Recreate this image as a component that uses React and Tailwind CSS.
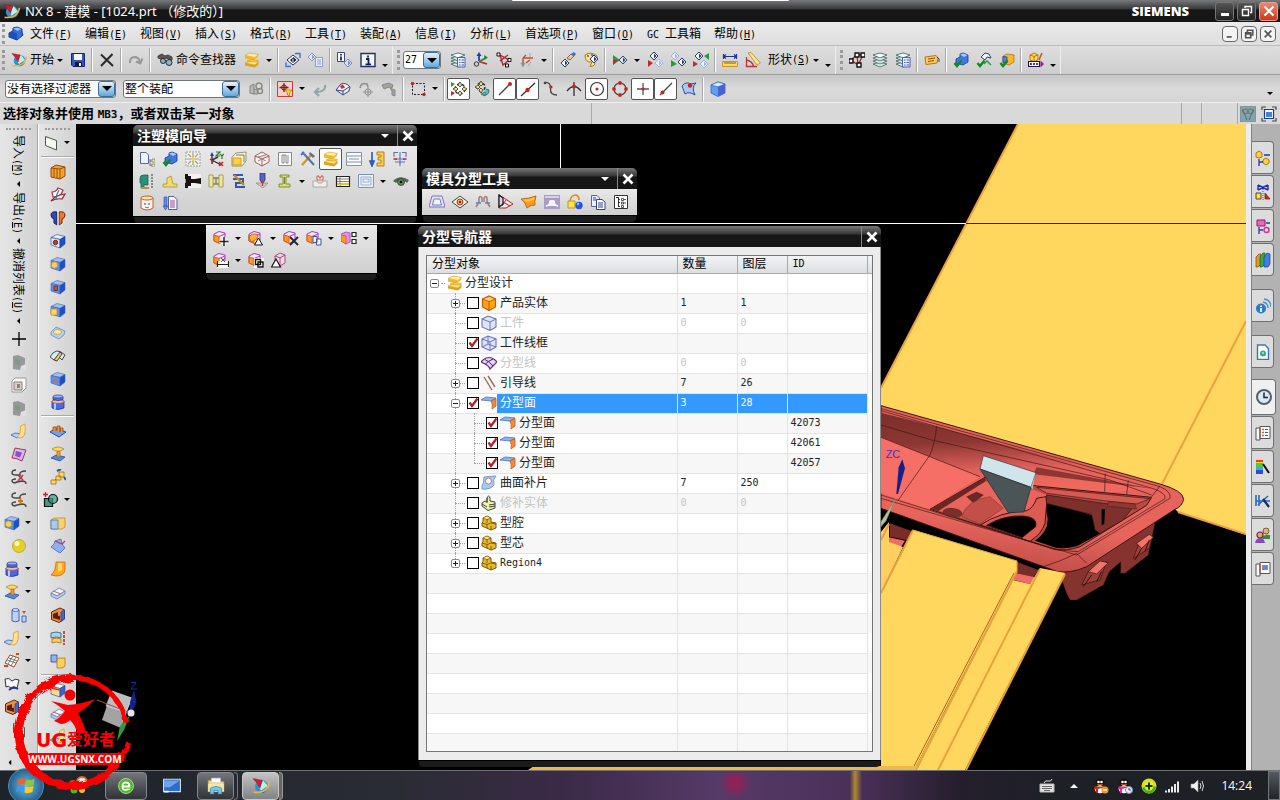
import React, { useState } from 'react';

//small shorthands, nearly every icon below is made of these
const P = ({ d, f = 'none', s = 'none', w = 1 }) => <path d={d} fill={f} stroke={s} strokeWidth={w} />;
const Cube = ({ t = '#9fc0f5', l = '#5f8fe8', r = '#1f4fc0', s = '#3f5fb0' }) => (
  <>
    <P d="M1 4.5 7 1.5 15 3.5 10 6.5Z" f={t} s={s} w={0.6} />
    <P d="M1 4.5 10 6.5 10 15 1 12Z" f={l} s={s} w={0.6} />
    <P d="M10 6.5 15 3.5 15 11 10 15Z" f={r} s={s} w={0.6} />
  </>
);
const MoldCube = () => (
  <>
    <P d="M1 4 6 1.5 12 3 12 10 6.5 13.5 1 11Z" f="#fbe6ff" s="#a03cc0" />
    <P d="M1 5 6 6.5 6 13 1 11Z" f="#ff9a20" s="#d86400" />
    <P d="M6 6.5 12 4" s="#a03cc0" />
  </>
);
const Layers = () => (
  <>
    <P d="M1 12 8 10 15 12 8 15Z" f="#d6f0e4" s="#3c5a60" w={0.8} />
    <P d="M1 9 8 7 15 9 8 12Z" f="#d6f0e4" s="#3c5a60" w={0.8} />
    <P d="M1 6 8 4 15 6 8 9Z" f="#d6f0e4" s="#3c5a60" w={0.8} />
    <P d="M1 3 8 1 15 3 8 6Z" f="#f0fff8" s="#3c5a60" w={0.8} />
  </>
);
const Gem = ({ x = 0, y = 0, c = '#27376b', f = '#ffffff' }) => (
  <g transform={`translate(${x} ${y})`}>
    <P d="M0 4 4 0 8 4 4 8Z" f={f} s={c} />
    <P d="M4 1.5 6.5 4 4 6.5Z" f={c} />
  </g>
);
const Tick = () => <P d="M1.5 11 4 14 8.5 8.5" s="#118a22" w={2.4} />;
const Stack = () => (
  <>
    <P d="M1 3.500 6 1 14.500 2.500 11 5.500Z" f="#fff0a8" s="#d29a12" w={0.6} />
    <P d="M1 3.5 11 5.5 14.5 2.5 14 5 9 8.5 1 6.5Z" f="#f0b828" />
    <P d="M3 9 8 7.5 14.5 8.5 11 11Z" f="#ffd24a" s="#d29a12" w={0.6} />
    <P d="M1 11 5 9.5 14.5 10 11 13Z" f="#ffe680" s="#d29a12" w={0.6} />
    <P d="M1 11 11 13 14.5 10 14.5 12.5 11 15.5 1 13.5Z" f="#e0a018" />
  </>
);
const Pot = () => (
  <>
    <P d="M2 7 14 7 14 14Q8 17 2 14Z" f="#4a68e4" s="#24368f" w={0.8} />
    <P d="M4 8 6 8 6 15 4 15Z" f="#b4c6ff" />
    <ellipse cx="8" cy="7.5" rx="6" ry="1.8" fill="#e9c0b0" stroke="#c2502a" strokeWidth="0.8" />
    <P d="M3 2.5 13 2.5 13 5.5Q8 7.5 3 5.5Z" f="#4f78e4" s="#24368f" w={0.8} />
    <ellipse cx="8" cy="2.500" rx="5" ry="1.5" fill="#9db8f8" stroke="#24368f" strokeWidth="0.7" />
  </>
);
const Ledge = ({ c = '#ffc83a' }) => (
  <>
    <P d="M0 12 4 10 11 11 6 15Z" f="#b8d4f8" s="#3d62b0" w={0.8} />
    <P d="M6 14Q10 12 9.5 3L14 1Q15 11 12 14Q9 16 6 14Z" f={c} s="#d69c38" w={0.8} />
  </>
);
const Section = () => (
  <>
    <P d="M1.5 5 10 1 14.5 3 14.5 12 9 15.5 1.5 12.5Z" f="#ef9040" s="#5c2a12" />
    <P d="M3 7 8 5 8 9 10 8.5 10 13 3 11Z" f="#55200c" />
    <P d="M11 5 14.5 3 14.5 12 11 14.5Z" f="#3a6ad8" s="#23408f" w={0.7} />
  </>
);
const Page = () => <P d="M1.5 1.5 7 1.5 9.5 4 9.5 12.5 1.5 12.5Z" f="#eef2ff" s="#5566a8" />;
const Penguin = ({ c }) => (
  <>
    <ellipse cx="7" cy="5" rx="4.5" ry="4.5" fill="#15120f" />
    <circle cx="5.5" cy="4" r="1.3" fill="#fff" />
    <circle cx="8.5" cy="4" r="1.3" fill="#fff" />
    <P d="M3.5 6.5 10.5 6.5 7 8.5Z" f="#ffae10" />
    <ellipse cx="7" cy="11.5" rx="5" ry="3.8" fill="#fff" />
    <P d="M1.5 8.5 12 8.5 13 12 9 10 5 11 5 15 3 15 3 11 1 12Z" f={c} />
  </>
);

const art = {
  nx: (
    <>
      <circle cx="8.5" cy="8.5" r="5.8" fill="#2b93d8" />
      <P d="M4 11Q9 15 13 10 12 14 8.5 14.3Z" f="#1a4fa0" />
      <P d="M10 3 14 8 8 12 6 9Z" f="#bdf0e8" />
      <P d="M1 1.5 9 3 7 10 5 6Z" f="#d81e2c" s="#8c1018" w={0.5} />
      <P d="M1.5 13.5Q14 15 15.5 4.5" s="#f3b32c" w={1.5} />
    </>
  ),
  part: (
    <>
      <P d="M1 7 5 5 5 2 9 1 14 3 14 6 15 9 9 14 1 11Z" f="#2f6fe0" s="#12388f" />
      <P d="M5 2.5 9 1.5 13.5 3 9.5 5Z" f="#8fc0ff" />
      <P d="M1 7 5 5.5 9 7.5 9 13.5 1 11Z" f="#1d50b8" />
    </>
  ),
  save: (
    <>
      <P d="M1.5 1.5 14.5 1.5 14.5 14.5 3 14.5 1.5 13Z" f="#3558b8" s="#14246a" />
      <P d="M4 2 12 2 12 8 4 8Z" f="#f2f6ff" />
      <P d="M5 10 12 10 12 14.5 5 14.5Z" f="#10183c" />
      <P d="M9 11 11 11 11 14 9 14Z" f="#fff" />
    </>
  ),
  cut: <P d="M2 2.5 14 14M13.5 2 2 14" s="#2a2a2a" w={2} />,
  redo: <P d="M2 11Q1.5 5 7 5 11 5.5 12 10M14.5 6.5 12.3 11.5 8 9.5" s="#979797" w={2} />,
  find: (
    <>
      <P d="M1 4 5 2 8 4 11 3 15 5 15 8 9 6 7 8 1 6Z" f="#5a5550" s="#332e2a" w={0.8} />
      <circle cx="6" cy="9" r="2.5" fill="#8fb0c8" stroke="#2b2b2b" />
      <circle cx="12" cy="10.5" r="3" fill="#8fb0c8" stroke="#2b2b2b" />
    </>
  ),
  stack: <Stack />,
  rot: (
    <>
      <P d="M2 8 8 3 14 8 8 13Z" f="#fff" s="#27376b" />
      <P d="M5 8 8.5 5 11.5 8 8 11Z" f="#101c4a" />
      <P d="M8 6.500v3.5" s="#fff" />
      <P d="M1 10.5V14.500H6M10 1.5H15V6" s="#3b74d8" w={1.4} />
    </>
  ),
  rotpage: (
    <>
      <Gem x={0} y={1} c="#8f99c0" f="#dfe6fb" />
      <P d="M7.5 5.5 14.5 5.5 14.5 14.5 7.5 14.5Z" f="#eef2ff" s="#8b98c8" />
      <P d="M9 8h4M9 10h4M9 12h4" s="#8b98c8" />
    </>
  ),
  infogem: (
    <>
      <P d="M.5 .5h7v9h-7Z" f="#fff" s="#3b4680" />
      <P d="M4 2v1.5M4 4.5v4" s="#1a2670" w={1.8} />
      <Gem x={7} y={7} c="#7488c8" f="#dce6ff" />
    </>
  ),
  info: (
    <>
      <P d="M1 1.5h14v13H1Z" f="#f4f6ff" s="#222f6a" w={1.4} />
      <P d="M8 3.5v2M6 7h2.5v5M5.5 12.3h5.5" s="#111a55" w={1.8} />
    </>
  ),
  layers: <Layers />,
  laylist: (
    <>
      <Layers />
      <P d="M7.5 5.5h7.5v9.5H7.5Z" f="#e8edff" s="#4e60a8" />
      <P d="M9 8h1.5M11.5 8h2.5M9 10.5h1.5M11.5 10.5h2.5M9 13h1.5M11.5 13h2.5" s="#4e60a8" />
    </>
  ),
  wcs: (
    <>
      <P d="M6 9V2" s="#1f3fb8" w={1.8} />
      <P d="M3.5 4 6 0 8.5 4Z" f="#1f3fb8" />
      <P d="M6 9.5 14 12" s="#cc1c1c" w={1.8} />
      <P d="M6 9.5 13 6" s="#21883a" w={1.8} />
      <P d="M11 3 15 5.5 11.5 8Z" f="#21883a" />
      <circle cx="3.5" cy="12" r="2.2" fill="none" stroke="#333" />
    </>
  ),
  wcsdrag: (
    <>
      <P d="M4 3 13 8 7 13ZM4 3 7 13M4 9 12 3" s="#a82632" w={1.3} />
      <P d="M1 1h3v3H1ZM12 6.5h3v3h-3ZM9.5 12h3v3h-3Z" f="#fff" s="#111" />
    </>
  ),
  axes: (
    <>
      <P d="M4 6V13M4 6H14M4 6 7 3M7 11 11 8" s="#b8503c" w={1.4} />
      <P d="M2 11 6 11 4 15ZM11 1v4M9 14 12 10" f="#888" s="#999" w={0.8} />
    </>
  ),
  brush: (
    <>
      <P d="M7 6 11 2 14 4 10 8Z" f="#f3c880" s="#555" w={0.8} />
      <P d="M11 2 14 0 16 2 14 4.500Z" f="#3b6ce0" />
      <Gem x={1} y={7} />
    </>
  ),
  palette: (
    <>
      <P d="M2 3Q8-1 14 4 15 8 11 9 14 14 7 14.5L9 10Q2 11 2 3Z" f="#ffe49a" s="#a87a20" />
      <circle cx="5" cy="4" r="1" fill="#d03030" />
      <circle cx="9" cy="3" r="1" fill="#3060d0" />
      <Gem x={7} y={3} />
    </>
  ),
  play: (
    <>
      <P d="M1 3 8 8 1 13Z" f="#2a9a3a" />
      <P d="M1 8 6 8 1 13Z" f="#c02a2a" />
      <Gem x={7} y={4} c="#3a4670" f="#dfe6fb" />
    </>
  ),
  gems1: (<><Gem x={3} y={0} /><Gem x={8} y={7} c="#9fb2e8" f="#e8efff" /><P d="M1 8 6 11 1 15Z" f="#c02a2a" /></>),
  gems2: (<><Gem x={1} y={0} c="#9fb2e8" f="#e8efff" /><Gem x={8} y={6} /><P d="M1 8 7 12 1 15Z" f="#2a9a3a" /></>),
  gems3: (<><Gem x={2} y={0} /><Gem x={7} y={8} c="#9fb2e8" f="#e8efff" /><P d="M0 9 5 12 0 15Z" f="#c02a2a" /><P d="M16 1 11 4 16 8Z" f="#2a9a3a" /></>),
  ruler: (
    <>
      <P d="M1.5 2v5M14.5 2v5M1.5 4.5h13M4 2.5 1.5 4.5 4 6.5M12 2.5l2.5 2L12 6.5" s="#25368f" w={1.2} />
      <P d="M.5 9.5h15v5H.5Z" f="#ffd868" s="#c89628" />
      <P d="M3 10v2M5 10v2M7 10v2M9 10v2M11 10v2M13 10v2" s="#80601a" />
    </>
  ),
  angle: (
    <>
      <P d="M1.5 5V14.5H12M1.5 8Q7 9 8.5 14" s="#b8343c" w={1.3} />
      <P d="M3 1 6 .5 15.5 11 12 13Z" f="#ffe08a" s="#b08a30" w={0.8} />
    </>
  ),
  netsel: (
    <>
      <P d="M2 8 8 3 14 3M8 3 9 13M2 8 9 13 14 3" s="#b01e1e" w={1.3} />
      <P d="M6 1h4v4H6ZM12 1h4v4h-4ZM0 7h4v4H0ZM8 11h4v4H8Z" f="#fff" s="#111" w={1.4} />
    </>
  ),
  tag: (
    <>
      <P d="M1 5 12 3.5 14 6 13 11 2 12.5Z" f="#ffc85a" s="#b87818" />
      <P d="M4 7 11 6M4 9.5 10 8.5" s="#8a5510" />
      <P d="M13 5Q16 6 15 10" s="#444" />
    </>
  ),
  okpart: (<><P d="M3 7 7 5 7 2 10 1 15 3 15 10 10 13 3 11Z" f="#3f78e4" s="#12388f" w={0.8} /><P d="M7 2.5 10 1.5 14.5 3 11 5Z" f="#a6ccff" /><Tick /></>),
  oksurf: (<><P d="M5 5 9 1 13 2 15 6 11 5 9 8Z" f="#e8f4ff" s="#2f3f7a" /><P d="M8 12 11 9 15 13" s="#2a9a3a" w={1.4} /><Tick /></>),
  okbox: (<><P d="M4 4 8 2 15 3 15 10 10 13 4 11Z" f="#f8b830" s="#b87010" w={0.8} /><P d="M4 4.5 8 5 8 11 4 10.5Z" f="#4f86e8" s="#22408f" w={0.8} /><Tick /></>),
  editbar: (
    <>
      <P d="M2 3 6 1 10 3 10 8 6 9.500 2 8Z" f="#ffd850" s="#b87810" />
      <P d="M2 3 6 4.5 10 3M6 4.5V9" s="#b87810" />
      <P d="M11 8 14 1" s="#c05c20" w={1.6} />
      <P d="M.5 9.5h11v5H.5Z" f="#fff" s="#22104f" w={1.2} />
      <P d="M3 11v2M6 11v2M9 11v2" s="#22104f" w={1.6} />
      <P d="M12.5 8.5 16 12 12.5 15.5Z" f="#9a1c90" />
    </>
  ),
  grayhold: (<><P d="M2 5 6 3 6 13 2 12ZM6 8 10 9 10 13 6 13" f="#b9b9b5" s="#85857f" /><circle cx="11" cy="5" r="3" fill="none" stroke="#8d8d86" strokeWidth="1.5" /><circle cx="12" cy="10" r="2.5" fill="none" stroke="#8d8d86" strokeWidth="1.5" /></>),
  snapf: (
    <>
      <P d="M.5 .5h15v15H.5Z" f="#f5cfca" s="#c34038" />
      <P d="M7 2v9M2.5 6.5h9" s="#7a2018" w={1.3} />
      <circle cx="7" cy="6.5" r="2.5" fill="none" stroke="#7a2018" />
      <P d="M8 9h7l-2.5 3v3l-2-1v-2Z" f="#ffd23a" s="#a87810" w={0.7} />
    </>
  ),
  back: <P d="M13 4Q14 11 4 11M7 7 3 11 7 15" s="#8fa6a6" w={2.2} />,
  gembox: (
    <>
      <P d="M1 9 6 3Q11 1 15 6L14 10 8 14Z" f="#e9eefc" s="#3a4678" />
      <P d="M1 9 8 10 8 14M8 10 14 6" s="#3a4678" />
      <P d="M5 5 8 3.5 10 6.5 6.5 8Z" f="#c8323a" />
    </>
  ),
  grayarc: (<><P d="M2 7Q3 1 9 3L10 6" s="#8f8f8f" w={1.6} /><circle cx="10" cy="11" r="3" fill="none" stroke="#8f8f8f" /><P d="M10 6v10M5 11h10" s="#8f8f8f" /></>),
  graytap: (<><P d="M1 4 8 2 12 4 11 7 8 6 3 8Z" f="#a3a29c" s="#8a8984" /><P d="M9 7 14 9 14 15 11 14 11 10Z" f="#a3a29c" s="#8a8984" /></>),
  rect: (<><rect x="2.5" y="2.5" width="12" height="11" fill="none" stroke="#222" strokeDasharray="2 1.5" /><circle cx="2.5" cy="2.5" r="1.7" fill="#c42222" /><circle cx="14" cy="13.5" r="1.7" fill="#c42222" /></>),
  snapall: (
    <>
      <circle cx="9" cy="8" r="5" fill="none" stroke="#222" strokeDasharray="3 2" strokeWidth="1.4" />
      <P d="M9 1 11 4 9 6 7 4ZM9 10 11 12 9 15 7 12ZM2 8 5 6 7 8 5 10ZM11 8 13 6 16 8 13 10Z" f="#f0dc80" s="#333" w={0.8} />
      <P d="M0 1 4 3 0 6Z" f="#2a9a3a" />
      <P d="M0 10 4 12 0 15Z" f="#c02a2a" />
    </>
  ),
  snapref: (
    <>
      <circle cx="7" cy="6" r="4" fill="none" stroke="#222" strokeDasharray="3 2" strokeWidth="1.4" />
      <P d="M7 0 9 3 7 5 5 3ZM7 7 9 9 7 12 5 9ZM1 6 4 4 6 6 4 8Z" f="#f0dc80" s="#333" w={0.8} />
      <P d="M9 14Q15 15 15 9L12 8M11 15 7 13 11 11Z" f="#5ac0b0" s="#257a78" />
    </>
  ),
  endpt: (<><P d="M2 14 13.5 2.5" s="#444" w={1.3} /><circle cx="13" cy="3" r="2" fill="#d42020" /></>),
  midpt: (<><P d="M1 15 15 2" s="#333" w={1.3} /><circle cx="7.5" cy="9" r="2.2" fill="#c82418" /></>),
  ctrlpt: (<><P d="M2 1.5Q8 1 7.5 8 7 14 14 14" s="#444" w={1.3} /><circle cx="2" cy="2" r="1.3" fill="#444" /><circle cx="8" cy="6" r="1.6" fill="#c82418" /></>),
  interpt: (<><P d="M8 1V15M1 10Q8 1 15 10" s="#333" w={1.3} /><circle cx="8" cy="5.5" r="2" fill="#c82418" /></>),
  center: (<><circle cx="8" cy="8" r="6.5" fill="none" stroke="#333" strokeWidth="1.2" /><circle cx="8" cy="8" r="1.6" fill="#d42020" /></>),
  quad: (<><circle cx="8" cy="8" r="6" fill="none" stroke="#444" strokeWidth="1.2" /><circle cx="8" cy="2" r="1.9" fill="#c82418" /><circle cx="8" cy="14" r="1.9" fill="#c82418" /><circle cx="2" cy="8" r="1.9" fill="#c82418" /><circle cx="14" cy="8" r="1.9" fill="#c82418" /></>),
  exist: (<><P d="M8 2V14M2 8H14" s="#555" w={1.3} /><circle cx="8" cy="8" r="1.6" fill="#d42020" /></>),
  oncurve: (<><P d="M2 14 14 2" s="#444" w={1.3} /><circle cx="4.5" cy="11.5" r="2" fill="#c82418" /></>),
  onface: (<><P d="M1 5Q5 0 10 3L15 2Q10 6 14 14 8 10 4 13Z" f="#a8c8f8" s="#2a4a9a" /><circle cx="9" cy="4.5" r="2.2" fill="#c82418" /></>),
  bluecube: (
    <>
      <P d="M1 4 8 1 15 3 15 12 8 15.5 1 12Z" f="#5da0f0" s="#2f62c8" w={0.8} />
      <P d="M1 4 8 1 15 3 8 6Z" f="#d8ecff" s="#2f62c8" w={0.7} />
      <P d="M8 6 15 3 15 12 8 15.5Z" f="#4c60d8" />
    </>
  ),
  flags: (<><P d="M0 0h16v16H0Z" f="#83a3ad" s="#7a8e96" /><P d="M2 4 7 3 8 7 4 8ZM14 4 9 3 8 7 12 8Z" f="#9a9a96" s="#63777e" /><P d="M3 4l4 10M13 4 9 14" s="#63777e" w={1.2} /></>),
  screen: (<><P d="M1 4V1h4M11 1h4v3M15 12v3h-4M5 15H1v-3" s="#444" w={1.2} /><P d="M3.5 3.5h9v9h-9Z" f="#fff" s="#223a78" w={1.2} /><P d="M5 6h6v5H5Z" f="#3c86d8" /></>),

  //injection mold wizard
  pagetree: (<><Page /><P d="M11 8v7M11 10h3M11 14h3" s="#7c7c5c" /><P d="M13 8h3v3h-3ZM13 13h3v3h-3Z" f="#e8e8c0" s="#7c7c5c" w={0.7} /></>),
  family: (<><rect x="1" y="1" width="14" height="14" fill="#f3f3ee" stroke="#999" strokeDasharray="2 1" /><P d="M8 2v12M2 8h12M3 3l3 3M13 3l-3 3M3 13l3-3M13 13l-3-3" s="#9ba080" w={1.2} /><circle cx="8" cy="8" r="1.8" fill="#e8dc40" /></>),
  xyz: (<><P d="M4 13V4M4 9 13 14M4 9 10 6" s="#333" w={1.4} /><P d="M2 5 4 1 6 5Z" f="#1f3fd0" /><P d="M8 1h4l-4 4h4M12 3l2 2 2-2M14 5v3" s="#1f7c30" w={1.2} /><P d="M2 8 6 11M11 11l4 4M15 11l-4 4" s="#c82020" w={1.5} /></>),
  workbox: (<><P d="M1 6 5 2 15 1 15 10 11 15 1 15Z" f="#f5f2e0" s="#857a50" w={0.8} /><P d="M2 7h8v7H2Z" f="#ffd040" s="#c89010" w={0.8} /><P d="M5 4h8v7" s="#857a50" /></>),
  layout: (<><P d="M8 1 15 5 8 8 1 5ZM1 5V11L8 15 15 11V5M8 8v7" f="#fdf1f0" s="#a04a48" w={0.9} /><P d="M4 6 12 4M4 10 8 8 12 10" s="#888" /></>),
  shrink: (<><P d="M1.5 1.5h13v13h-13Z" f="#fbfbfb" s="#8a8a8a" /><P d="M9 4H5V12H7V8M7 4V8M11 12H9V4M11 4V12" s="#888" /></>),
  tools: (<><P d="M2 14 12 3" s="#d29a20" w={2.4} /><P d="M14 14 5 4M2 1 6 5M1 4 4 1" s="#5470b8" w={2} /><P d="M10 1 15 5 13 7 9 3Z" f="#6a6f88" /></>),
  list: (<><P d="M.5 1.5h15v13H.5Z" f="#f8f9fc" s="#8892a8" /><P d="M1 5h14M3 8h10M1 11h14" s="#8892a8" /></>),
  clamp: (<><P d="M3 1v10M1 10h4l-2 5Z" f="#3f74d8" s="#2a58b8" w={1.6} /><P d="M8 1h7v14H8V12h4V9H9V6h3V4H8Z" f="#ffcf48" s="#a87810" w={0.9} /></>),
  mirror: (<><P d="M8 1v14M2 6V1.5h4M14 6V1.5h-4M1 8h14M3 11h10" s="#5a72b8" w={1.1} /><P d="M2 8h3M11 8h3" s="#d03030" w={1.6} /></>),
  slide: (<><P d="M1 5Q1 2 5 2H9V12H5V15H2V10H1Z" f="#2a8f7c" s="#17584c" w={0.7} /><P d="M2 15h8" s="#d08830" w={2} /><path d="M13 1v14" stroke="#888" strokeWidth="2" strokeDasharray="2 1" /></>),
  insert: (<><P d="M1 11h4V5l4-2 2 8h4v3H1Z" f="#f5df5c" s="#a8922a" w={0.8} /><P d="M1 14h14" s="#bbb" /></>),
  runner: (<><P d="M0 1h16v14H0Z" f="#161212" /><P d="M3 1h13v4l-6 1H6V3H3ZM3 15h13v-4l-6-1H6v3H3Z" f="#f7eef0" /><P d="M0 6v4" s="#d8a020" w={2} /></>),
  gate: (<><P d="M1 2h4v12H1ZM11 2h4v12h-4Z" f="#f2e9a0" s="#9a8c30" w={0.8} /><P d="M5 5h6M5 11h6M8 5v6" s="#8a8440" w={1.4} /></>),
  hammer: (<><P d="M2 2h10M2 6h10v4H5v4h9" s="#2f59b4" w={2} /><P d="M3 2 13 12" s="#c08828" w={2.2} /></>),
  drill: (<><P d="M6 0h5v7l-2.5 4L6 7Z" f="#5a62c0" s="#2b3270" w={0.8} /><P d="M2 10h12L9 15Z" f="#c9c6c2" s="#888" w={0.7} /><P d="M8.5 8v5" s="#c03a30" w={1.2} /></>),
  ejector: (<><P d="M3 2h9v2h-3v7h4v3H2v-3h4V4H3Z" f="#dbe06a" s="#7c8428" w={0.9} /><P d="M7.5 4v7" s="#7c8428" /></>),
  pocket: (<><P d="M1 8h4l1 2h4l1-2h4v6H1Z" f="#efefe8" s="#9c9c94" w={0.8} /><P d="M5 7V3h2v2h2V3h2v4Z" f="#fff" s="#c8584c" /></>),
  bom: (<><P d="M1.5 3.5h13v10h-13Z" f="#fdfdf0" s="#222" w={1.2} /><P d="M2 6h12M2 8.5h12M2 11h12M5 3v10" s="#666" w={0.8} /><P d="M2 11.5h12" s="#e0c828" /></>),
  drawing: (<><P d="M.5 1.5h15v13H.5Z" f="#eef3fa" s="#7c93b8" /><P d="M3 4h10v8H3ZM5 6h6v3H5Z" s="#9aaccc" /></>),
  eye: (<><P d="M0 8Q7 1 16 7L14 10Q8 4 3 10Z" f="#5a665c" /><circle cx="8" cy="9" r="3.5" fill="#5c8a50" stroke="#333" strokeWidth="0.8" /><circle cx="8" cy="9" r="1.3" fill="#111" /></>),
  jar: (<><P d="M2 3V13Q8 17 14 13V3" f="#fdf4e4" s="#c05a40" /><ellipse cx="8" cy="3" rx="6" ry="2" fill="#ffe890" stroke="#c05a40" /><circle cx="6" cy="9" r="1" fill="#4a8ad0" /><circle cx="10" cy="9" r="1" fill="#4a8ad0" /><P d="M6 12Q8 13.5 10 12" s="#4a8ad0" /></>),
  report: (<><P d="M2 2h3v9h-3ZM1 11h5l-2.5 4Z" f="#5f8ae0" s="#3a5cb0" w={0.7} /><P d="M6.5 1.5H12L15 4.5V14.5H6.5Z" f="#f6f6ff" s="#5060a0" /><P d="M8 6h5M8 8h5M8 10h5M8 12h5" s="#a04a80" /></>),
  mcmove: (<><MoldCube /><P d="M11 7v9M6.5 11.5h9" s="#fff" w={3.4} /><P d="M11 7v9M6.5 11.5h9" s="#222" w={1.5} /></>),
  mctri: (<><MoldCube /><P d="M1 7Q4 2 10 5L9 9 3 12Z" f="#ffb030" s="#c05a10" w={0.8} /><P d="M10.5 8 14.5 15H6.5Z" f="#fff" s="#111" /></>),
  mccut: (<><MoldCube /><P d="M7 7 15 15M15 7 7 15" s="#222" w={1.8} /></>),
  mccopy: (<><MoldCube /><P d="M7 6.5h4v6H7ZM10.5 9h4.5v6h-4.5Z" f="#f4f6ff" s="#3f5398" /></>),
  mcpair: (<><P d="M0 4 5 2 9 3 9 12 5 14 0 11Z" f="#e090f0" s="#a03cc0" w={0.8} /><P d="M0 5 5 6 5 14 0 11Z" f="#ff9a20" s="#d86400" w={0.8} /><P d="M11 2.5h4v4h-4ZM11 9.5h4v4h-4Z" f="#fff" s="#222" w={1.2} /></>),
  mcdim: (<><MoldCube /><P d="M4 9h12v7H4Z" f="#fff" /><P d="M4.5 9v6M15.5 9v6M5 12.5h10" s="#222" w={1.2} /><P d="M8 6l4 4M12 6l-4 4" s="#555" /></>),
  mcgrp: (<><MoldCube /><P d="M6 6h10v10H6Z" f="#fff" /><P d="M7.5 7.5h5v5h-5ZM10 10h5v5h-5Z" s="#111" w={1.4} /></>),
  mcdup: (<><P d="M4 4 9 1 14 3 14 11 9 14 4 11ZM9 6v8M4 4 9 6 14 3" f="#fbd8ea" s="#b04878" /><P d="M5 7 9.5 15H.5Z" f="#fff" s="#111" w={1.2} /></>),

  //mold parting tools
  region: (<><P d="M3 2h10l3 11H0Z" f="#ece2f6" s="#8a6ac0" /><P d="M5 5h6l1.5 6h-9Z" f="#eef8ff" s="#5c86b8" /></>),
  checkr: (<><P d="M0 8 8 2 16 8 8 14Z" f="#f4f4ea" s="#444" /><circle cx="8" cy="8" r="3" fill="#f0a060" stroke="#b03818" /><circle cx="8" cy="8" r="1" fill="#223" /></>),
  patch: (<><P d="M1 13 4 8V4Q5 1 7 4V8M15 13 12 8V4Q11 1 9 4V8" s="#a87878" w={1.5} /><P d="M1 9h5M10 9h5" s="#5a84c0" w={1.4} /></>),
  design: (<><P d="M1 1 6 4 15 10 8 14 1 14Z" f="#fbe4e4" s="#b02a2a" /><P d="M5 8 12 12M8 6 4 12" s="#b02a2a" /><P d="M1 1v12l4-3V4Z" f="#c8dcf8" s="#111" w={1.2} /></>),
  surf: (<><P d="M0 5Q7 5 15 2 13 8 14 11 9 11 6 14 5 9 0 5Z" f="#ff9a18" s="#c06a08" /><P d="M2 5.5Q8 5.5 14 3L13 6Q8 8 5 8Z" f="#ffc050" /></>),
  cavity: (<><P d="M0 1h16v14H0Z" f="#a99cc8" /><P d="M2 12 5 11 6 7H10L11 11 14 12" f="#f4f0fa" s="#fff" w={1.4} /><P d="M1 3h14" s="#d6cdea" w={2} /></>),
  swap: (<><P d="M3 7Q4 1 9 1 12 2 12 6" s="#e08818" w={1.6} /><P d="M1 7h7v7H1Z" f="#ffe050" s="#b89818" /><circle cx="12" cy="11.5" r="3.7" fill="#2458d8" /><circle cx="11" cy="10" r="1.2" fill="#9cbcff" /></>),
  copies: (<><Page /><P d="M6.5 5.5H12L15 8V15.5H6.5Z" f="#fff" s="#31458f" /><P d="M8 9h5M8 11h5M8 13h5M3 4h3M3 6h3" s="#31458f" /></>),
  navtree: (<><P d="M1.5 1.5h13v13h-13Z" f="#fff" s="#333" /><P d="M5.5 3v10M5 5.500h2M5 8.5h2M5 12.5h2M3 3.5h3" s="#333" /><P d="M8.5 4.5h2v2h-2ZM8.5 8h2v2h-2ZM8.5 11.5h2v2h-2ZM11 5.5h2M11 9h2" s="#333" w={0.8} /></>),

  //left columns
  gray1: (<><P d="M2 2 7 1 14 4V14L9 16 2 15Z" f="#96989c" /><P d="M4 5l5 1v5l-5-1Z" f="#7f9a80" /><P d="M10 12l5-2v6l-6 0Z" f="#e0e0e0" /></>),
  gray2: (<><P d="M1 4 4 1H15V11L11 15H1Z" f="#fafafa" s="#999" /><P d="M3 5h8v8H3Z" f="#ddd0cc" s="#8a7a78" /><P d="M6 7h3v4H6Z" f="#a07a78" /></>),
  fork: <Ledge c="#ffdf90" />,
  purple: (<><P d="M1 12 4 2Q9 3 15 4L11 15Q6 12 1 12Z" f="#dcb4f0" s="#9c3a50" /><P d="M5 5 11 6.5 9 11.5 4 10Z" f="#8a4cc8" /></>),
  curve1: (<><P d="M5 1Q1 1 1 4 1 6 5 6H9Q8 2 15 2M5 10Q1 10 1 12 2 15 6 13L11 12Q15 12 15 15" s="#444" w={1.4} /><P d="M7 6 12 11M12 6 7 12" s="#c03048" w={1.6} /></>),
  curve2: (<><P d="M5 1Q1 1 1 4 1 6 5 6H9Q8 2 15 2M5 10Q1 10 1 12 2 15 6 13L11 12Q15 12 15 15" s="#4a4a44" w={1.5} /><P d="M7 9h5M9.5 6v6" s="#d87018" w={1.8} /></>),
  cubegold: (<><Cube /><circle cx="4.5" cy="9" r="3.2" fill="#f4d060" stroke="#b89020" strokeWidth="0.7" /></>),
  cubehole: (<><Cube t="#e6eeff" l="#dfe8fa" s="#23408f" /><circle cx="5.5" cy="9.5" r="2.2" fill="#c04030" stroke="#602018" /></>),
  cubedent: (<><Cube /><P d="M4 7h3.5v4.5H4Z" f="#b8584a" s="#5c2a30" w={0.8} /></>),
  cubepad: (<><Cube /><P d="M1 7h6v6H1Z" f="#ffd860" s="#c09020" w={0.8} /></>),
  cubeslot: (<><Cube /><P d="M3 9.500 8 10.5" s="#d86a40" w={2} /></>),
  ball: (<><circle cx="8" cy="8" r="6.5" fill="#e0cf2c" stroke="#b8a418" strokeWidth="0.8" /><circle cx="6" cy="5.5" r="2.5" fill="#fbf6a8" /></>),
  pot: <Pot />,
  post: (<><P d="M1 12 6 9 15 11 10 15Z" f="#4f8ae0" s="#1f4fa8" w={0.8} /><P d="M7 5h3v6H7Z" f="#f2a030" s="#a86010" w={0.7} /><P d="M2 3Q8-1 14 3L10 5H6Z" f="#ffd860" s="#b88a20" w={0.8} /></>),
  cyls: (<><P d="M1 3v11q3.5 1.500 7 0V3Z" f="#bcd0f8" s="#4a66b8" /><ellipse cx="4.5" cy="3" rx="3.5" ry="1.4" fill="#eef" stroke="#4a66b8" /><P d="M11 9v6h4V9Z" f="#bcd0f8" s="#4a66b8" /><P d="M11 4h4l-2 3Z" f="#d05020" /></>),
  mesh: (<><P d="M1 10 6 2 15 5 10 14Z" f="#fff" s="#a84a30" /><P d="M4 11 9 3M7 13 12 4M3 7 12 10M5 5 13 8" s="#777" /><P d="M0 13h4M12 1h3" s="#d04a20" w={1.8} /></>),
  book: (<><P d="M1 3Q5 1 8 5 11 2 15 4L13 12Q9 9 7 12 4 9 2 11Z" f="#f7f7fb" s="#333" /><P d="M5 14Q9 10 14 13" s="#26349a" w={1.8} /></>),
  section: <Section />,
  sheet: <P d="M2.5 1.5 13.5 5.5 13.5 15 2.5 10.5Z" f="#f3f8f0" s="#4b5a4b" />,
  crate: (<><P d="M1 4 6 1 15 3 15 12 10 15 1 13Z" f="#f6a030" s="#8c4a08" /><P d="M4 4V13M7 5V14M10 5V15M1 4 10 5 15 3" s="#8c4a08" w={0.9} /></>),
  blades: (<><P d="M3 10 2 5Q6 5 8 1L13 3Q12 7 9 9Z" f="#fff" s="#b82c38" w={1.2} /><P d="M1 14Q6 8 15 7L12 12Q7 11 1 14Z" f="#d8f0f4" s="#9c2030" w={1.2} /><P d="M9 3Q6 8 6 13" s="#2a8a98" w={1.4} /></>),
  vase: (<><P d="M7 2Q1 1 1 5 1 8 4 9V13L7 15Z" f="#2f4ab8" s="#1a2050" /><P d="M9 2Q15 1 15 5 15 8 12 9V13L9 15Z" f="#f07a28" s="#6c2408" /><P d="M8 1v14" s="#fff" /></>),
  saucer: (<><P d="M1 7 6 2 15 6 14 10 9 14 1 10Z" f="#b4d0ee" s="#6a8ab8" w={0.8} /><ellipse cx="7.5" cy="7" rx="4" ry="2.5" fill="#fce89c" stroke="#b89c50" strokeWidth="0.8" /></>),
  dome: (<><P d="M0 9Q6-2 15 7L12 12 9 9Q7 8 4 12Z" f="#d6ecf4" s="#3c4c58" /><P d="M4 12 10 4 12 6 7 13Z" f="#f0c860" s="#333" w={0.9} /></>),
  tray: (<><P d="M0 9 6 5 16 9 9 14Z" f="#6fa0e8" s="#2b4f9a" /><P d="M3 8V4h3v4M7 8V3h3v6M10 9V5h3v4" f="#f09040" s="#a04a10" w={0.8} /></>),
  chain: (<><P d="M3 13 8 8 12 6" s="#444" /><P d="M1 11h5v4H1ZM6 7h5v4H6ZM9 3h5v5H9Z" f="#ffd860" s="#a87c18" w={0.9} /><P d="M7 2 11 0M14 8l2 3" s="#2d5098" w={2} /></>),
  bool: (<><P d="M1.5 6.5h8v8h-8Z" f="#3f9a80" s="#111" w={1.2} /><circle cx="10" cy="7" r="4.5" fill="#3f9a80" fillOpacity=".7" stroke="#111" strokeWidth="1.2" /><P d="M2.5 0v5M0 2.5h5" s="#c82020" w={1.3} /></>),
  duo: (<><P d="M1 5 4 3H15V12L12 14H1Z" f="#ffd070" s="#b88a30" w={0.8} /><P d="M1 5h7v9H1Z" f="#a6ccf0" s="#4a78b0" w={0.8} /></>),
  wave: (<><P d="M1 9Q5 6 5 3L11 1Q11 6 15 10L10 15Q5 12 1 9Z" f="#8fb0f0" s="#4a66b8" w={0.8} /><P d="M5 3 12 6 15 3" s="#c03a48" w={1.2} /></>),
  flame: (<><P d="M6 1H15V9Q14 15 6 15L1 14Q6 10 6 1Z" f="#ffa820" s="#c86a08" w={0.8} /><P d="M8 2h4v7l-4 2Z" f="#ffd468" /></>),
  slab: (<><P d="M1 9 9 4 15 7 7 12Z" f="#eef4ff" s="#7088b0" w={0.9} /><P d="M1 9V12L7 15 15 10V7L7 12Z" f="#b8ccf0" s="#7088b0" w={0.9} /><P d="M3 7 11 10" s="#c85a60" /></>),
  pads: (<><P d="M1 3Q6 1 11 3V8Q6 6 1 8Z" f="#a6d4e8" s="#3a6a90" w={0.9} /><P d="M2 9Q6 7 11 9V13Q6 11 2 13Z" f="#ffc860" s="#b07818" w={0.9} /><path d="M14 1v14" stroke="#c02828" strokeWidth="1.6" strokeDasharray="3 1" /></>),
  tubes: (<><P d="M1 2h6v7H1Z" f="#8fb4f0" s="#33589c" w={0.9} /><P d="M7 7 9 5H15V13L12 15H7Z" f="#ffd060" s="#b88418" w={0.9} /></>),
  boxred: (<><Cube t="#fff" l="#ffd890" r="#3b62d0" s="#2a3c90" /><P d="M1.5 6 9.5 8" s="#d83030" w={1.4} /></>),

  //tree
  orangecube: (<><P d="M1.5 4 8 1 14.5 4 14.5 12 8 15.5 1.5 12Z" f="#ffa318" s="#c25a00" w={1.2} /><P d="M1.5 4 8 6.5 14.5 4M8 6.5V15" s="#c25a00" /><P d="M3 4 8 2 13 4 8 6Z" f="#ffd070" /></>),
  ghostcube: (<><P d="M1 4 7 1 15 4 15 12 9 15.5 1 12Z" f="#dfe4fb" s="#6a74bc" w={1.1} /><P d="M1 4 9 7 15 4M9 7V15" s="#6a74bc" /></>),
  wirecube: (<><P d="M1 4 7 1 15 4 15 12 9 15.5 1 12Z" f="#dfe4fb" s="#6a74bc" w={1.1} /><P d="M1 4 9 7 15 4M9 7V15M7 1V9L1 12M7 9 15 12" s="#6a74bc" /></>),
  fan: (<><P d="M0 7Q8-2 16 7L9 14Q8 10 0 7Z" f="#e7d4f2" s="#6a2a88" w={1.2} /><P d="M4 4.5Q9 7 12 11M12 4Q7 6 4 9.5" s="#3a2a58" /></>),
  guides: <P d="M3 2 11 15M7 1 14 12" s="#99705c" w={1.4} />,
  psurf: (<><P d="M0 5 5 2 15 3 10 6Z" f="#8ab4ec" s="#4b72b8" w={0.8} /><P d="M10 6 15 3.500V11L11 14Q12 9 10 6Z" f="#f28a40" s="#c05818" w={0.8} /></>),
  patchsurf: (<><P d="M1 11Q3 8 3 2L15 1Q11 5 13 10 9 15 1 14Z" f="#a8caf6" s="#6a92cc" w={0.9} /><circle cx="7.5" cy="6" r="3" fill="#fff" stroke="#c87860" /></>),
  hand: (<><P d="M6 7V3Q7.5-1 9 3V6L14 7V13L7 15.5 1 11 1 8 4 6Z" f="#f4f1a8" s="#444" /><P d="M6 3V8M8 10 14 9M8 12 14 11M1 9l5 3" s="#444" /></>),
  blocks: (<><P d="M2 3 6 1 10 3V7L15 8V13L10 15 1 11V8L2 7Z" f="#e9b92c" s="#7c5a08" /><P d="M2 3 6 4.5 10 3M6 4.5V8M1 8 6 9.5 10 8 15 9M6 9.5V13M10 11V15" s="#7c5a08" w={0.9} /><P d="M2.5 3 6 1.5 9 3 6 4Z" f="#ffe890" /></>),

  //resource bar
  asmnav: (<><P d="M1 3 4 1 7 3V7L4 8 1 7ZM8 10 11 8 14 10V13L11 15 8 13Z" f="#ffd040" s="#a87808" /><P d="M4 9v7M4 12h4M9 5h6" s="#2a3a98" w={1.3} /></>),
  constr: (<><P d="M3 1v5M13 1v5M3 1 13 6M13 1 3 6" s="#2030a8" w={1.4} /><path d="M8 5v11" stroke="#555" strokeDasharray="1 1" /><P d="M1 9h5v6H1Z" f="#ffe040" s="#222" w={0.8} /><P d="M10 15V9l5 6Z" f="#c82828" s="#701010" w={0.7} /></>),
  partnav: (<><P d="M2 2h8v6H2Z" f="#e86ab8" s="#8c1c68" /><P d="M4 9v7M4 12h4M11 5h4" s="#2a3a98" w={1.3} /><circle cx="11.5" cy="12" r="2.5" fill="none" stroke="#c83a90" strokeWidth="1.4" /></>),
  books: (<><P d="M1 5 4 2 6 2V12L3 15H1Z" f="#e09820" s="#7c4808" w={0.7} /><P d="M5 5 8 1H10V12L7 15H5Z" f="#3aa84a" s="#155c20" w={0.7} /><P d="M9 5 12 1 15 2V12L13 15H9Z" f="#3f80e0" s="#1a3f90" w={0.7} /></>),
  web: (<><circle cx="6" cy="10.5" r="5" fill="#2a7cc8" /><P d="M6 7.5v1.5M6 10v4" s="#fff" w={1.8} /><P d="M8 4Q13 5 13 10M9 1Q16 2 16 9" s="#4c90d0" w={1.4} /></>),
  histpage: (<><P d="M2.5 1H10L13.5 4.5V15.5H2.5Z" f="#fafdff" s="#3c78a8" w={1.4} /><circle cx="8" cy="9.5" r="3" fill="#3aa890" /><P d="M8 8v2" s="#fff" /></>),
  clock: (<><circle cx="8" cy="8" r="7" fill="#dbe8f6" stroke="#55606e" strokeWidth="2" /><P d="M8 3.5V8.5H12" s="#1a2738" w={1.5} /></>),
  roles: (<><P d="M1 3H5V15H1ZM5 1.5H15V13.5H5Z" f="#fbfbfb" s="#555" /><P d="M7 4.500h2M7 7.5h2M7 10.5h2" s="#d06a30" w={1.6} /><P d="M10 4.5h3M10 7.5h3M10 10.5h3" s="#3a5ca8" /></>),
  rainbow: (<><P d="M1 1h7v4H1Z" f="#f8e020" /><P d="M1 4h7v4H1Z" f="#50c840" /><P d="M1 8h7v3H1Z" f="#30b0e8" /><P d="M1 11h7v4H1Z" f="#3048d8" /><P d="M1 1h7v2H1Z" f="#e84020" /><P d="M8 5 14 14" s="#111" w={2} /></>),
  jet: (<><P d="M1 2v11M4 2v11M1 8h14M3 12 13 3" s="#2a68c0" w={1.6} /><P d="M8 6 14 14" s="#14305c" w={2.2} /></>),
  people: (<><circle cx="11" cy="4" r="3" fill="#e0b080" stroke="#604020" strokeWidth="0.8" /><P d="M7 12Q8 7 15 8V12Z" f="#3a8a3a" /><circle cx="5" cy="8" r="3" fill="#d8a878" stroke="#702c20" strokeWidth="1.2" /><P d="M0 16Q1 11 5 11T10 16Z" f="#8a48c0" /></>),
  card: (<><P d="M1 3H5V15H1ZM5 1.5H15V12.5H5Z" f="#fbfbfb" s="#555" /><P d="M7 4h6v5H7Z" f="#e86a50" /><P d="M8 5h4v3H8Z" f="#5f8ae8" /></>),

  //taskbar
  keyboard: (<><P d="M1 6h14v8H1Z" f="#e5e5e5" s="#bbb" /><P d="M3 8.5h10M3 10.5h10M5 12.5h6" s="#555" w={0.9} /><P d="M5 5Q6 2 9 3T13 1" s="#ddd" /></>),
  qq1: (<><Penguin c="#c82a18" /><circle cx="12" cy="12" r="3.5" fill="#f0922c" /><P d="M10 12h4" s="#fff" w={1.4} /></>),
  qq2: (<><Penguin c="#e02a90" /><circle cx="12" cy="12" r="3.5" fill="#e4ecf8" stroke="#7c94c0" /><P d="M12 10v2h2" s="#445" /></>),
  safe: (<><circle cx="8" cy="8" r="7.5" fill="#d8e020" /><P d="M1 10Q8 5 15 9 14 15 8 15.5 3 15 1 10Z" f="#4fae1a" /><circle cx="8" cy="8" r="4.5" fill="#e8ee30" /><P d="M8 4.5v7M4.5 8h7" s="#143808" w={2} /></>),
  signal: <P d="M1 14.5v-2M4 14.5v-3.5M7 14.5v-6M10 14.5v-8.5M13 14.5v-11" s="#fff" w={1.8} />,
  speaker: (<><P d="M2 6H5L9 2V14L5 10H2Z" f="#f2f2f2" s="#aaa" w={0.6} /><P d="M11 5Q13 8 11 11M13 3Q16 8 13 13" s="#ddd" /></>),
  browser: (<><circle cx="8" cy="8" r="7.5" fill="#4fb82c" stroke="#b8f0a0" strokeWidth="0.8" /><P d="M4.5 8.5H11.5Q11.5 4.5 8 4.5T4.5 8.5 8 11.8 11.3 10.8" s="#fff" w={1.8} /></>),
  desktop: (<><P d="M.5 2h15v11H.5Z" f="#2e6cc8" s="#c8dcf0" /><P d="M1 3h14l-9 6H1Z" f="#6fa4ea" /><P d="M1 13h4" s="#fff" w={1.5} /></>),
  folder: (<><P d="M1 3h5l1 1h8v9H1Z" f="#f2d888" s="#b8964a" w={0.7} /><P d="M4 1h8v4H4Z" f="#fdfdf0" s="#ccc" w={0.5} /><P d="M1 6h14v7H1Z" f="#f8e6a4" /><P d="M3 15V10Q8 7 13 10V15H10V12H6V15Z" f="#7cc4e8" s="#3a88b8" w={0.7} /></>),
};

const Icon = ({ name, size = 'size-4' }) => (
  <svg viewBox="0 0 16 16" className={`${size} shrink-0`} aria-hidden="true">{art[name]}</svg>
);

const CJK = "font-['Liberation_Sans','Noto_Sans_CJK_SC',sans-serif]";
const MONO = "font-['DejaVu_Sans_Mono',monospace]";

const Arrow = ({ low, side }) => (
  <span className={`flex w-3 shrink-0 items-center justify-center ${low ? 'pt-2.5' : ''}`}>
    <svg viewBox="0 0 6 3" className={`h-[3px] w-1.5 ${side ? 'rotate-90' : ''}`}><path d="M0 0H6L3 3Z" fill="#000" /></svg>
  </span>
);
const Sep = () => <span className="mx-0.5 h-6 w-0.5 shrink-0 border-r border-white bg-[#a9a9a9]" />;
const Grip = () => <span className="mr-0.5 ml-0.5 h-5 w-[3px] shrink-0 border-r-3 border-dotted border-[#9a9a9a]" />;
const Edge = () => <span className="mr-0.5 h-full w-0.5 shrink-0 border-r border-[#eee]" />;

//one string per toolbar: | separator, v menu arrow, V low arrow, * pressed button
const Tools = ({ items }) =>
  items.split(' ').map((it, i) => {
    if (it === '|') return <Sep key={i} />;
    if (it === 'v' || it === 'V') return <Arrow key={i} low={it === 'V'} />;
    const on = it[0] === '*';
    const name = on ? it.slice(1) : it;
    return (
      <button
        key={i}
        aria-label={name}
        className={`flex h-[22px] w-[23px] shrink-0 items-center justify-center rounded-xs ${on ? 'border border-[#555] bg-white' : 'hover:bg-white/50'}`}
      >
        <Icon name={name} />
      </button>
    );
  });

const Combo = ({ value, label, width, latin }) => (
  <span className={`relative h-[18px] shrink-0 ${width}`}>
    <select aria-label={label} className={`h-full w-full appearance-none rounded-[3px] border border-[#6c7780] bg-white pl-px leading-none text-black ${latin ? `text-[10px] ${MONO}` : 'text-[12px]'}`}>
      <option>{value}</option>
    </select>
    <span className="pointer-events-none absolute top-px right-px flex h-4 w-[17px] items-center justify-center rounded-[3px] border border-[#3c6c94] bg-linear-to-b from-[#e6f3fc] to-[#5fa8dc]">
      <svg viewBox="0 0 10 5" className="h-[5px] w-2.5"><path d="M0 0H10L5 5Z" fill="#000" /></svg>
    </span>
  </span>
);

const menus = [
  ['文件', 'F'], ['编辑', 'E'], ['视图', 'V'], ['插入', 'S'], ['格式', 'R'], ['工具', 'T'], ['装配', 'A'],
  ['信息', 'I'], ['分析', 'L'], ['首选项', 'P'], ['窗口', 'O'], ['GC 工具箱', ''], ['帮助', 'H'],
];

const Mnemonic = ({ k }) => (k ? <span className={`text-[10px] ${MONO}`}>(<u>{k}</u>)</span> : null);

const WinX = () => <svg viewBox="0 0 12 12" className="size-3"><path d="M1.5 1.5 10.5 10.5M10.5 1.5 1.5 10.5" stroke="#fff" strokeWidth="2.6" /></svg>;

const Float = ({ title, drop, pos, children }) => (
  <section className={`absolute flex flex-col ${pos}`}>
    {title && (
      <header className="flex h-[21px] shrink-0 items-center rounded-t-[5px] bg-linear-to-b from-[#777] via-[#3c3c3c] via-35% to-[#161616] to-45% pl-1 text-white">
        <h2 className="grow text-[14px] leading-none font-bold">{title}</h2>
        {drop && <svg viewBox="0 0 8 4" className="mr-2 h-1 w-2"><path d="M0 0H8L4 4Z" fill="#fff" /></svg>}
        <button aria-label="关闭" className="flex h-full w-5 items-center justify-center border-l border-[#888]"><WinX /></button>
      </header>
    )}
    {children}
    <div className="mx-px mt-px h-1.5 shrink-0 rounded-b-[4px] bg-[#1b1b1b]" />
  </section>
);

const treeRows = [
  { name: '产品实体', icon: 'orangecube', exp: '+', n: '1', layer: '1' },
  { name: '工件', icon: 'ghostcube', n: '0', layer: '0', off: true },
  { name: '工件线框', icon: 'wirecube', on: true },
  { name: '分型线', icon: 'fan', n: '0', layer: '0', off: true },
  { name: '引导线', icon: 'guides', exp: '+', n: '7', layer: '26' },
  { name: '分型面', icon: 'psurf', exp: '-', on: true, n: '3', layer: '28' },
  { name: '分型面', icon: 'psurf', sub: true, on: true, id: '42073' },
  { name: '分型面', icon: 'psurf', sub: true, on: true, id: '42061' },
  { name: '分型面', icon: 'psurf', sub: true, on: true, id: '42057' },
  { name: '曲面补片', icon: 'patchsurf', exp: '+', n: '7', layer: '250' },
  { name: '修补实体', icon: 'hand', n: '0', layer: '0', off: true },
  { name: '型腔', icon: 'blocks', exp: '+' },
  { name: '型芯', icon: 'blocks', exp: '+' },
  { name: 'Region4', icon: 'blocks', exp: '+', latin: true },
];

const Expander = ({ sign }) => (
  <button aria-label={sign === '+' ? '展开' : '折叠'} className="flex size-[9px] items-center justify-center rounded-xs border border-[#8a8a8a] bg-white">
    <svg viewBox="0 0 5 5" className="size-[5px]"><path d={sign === '+' ? 'M0 2.5H5M2.5 0V5' : 'M0 2.5H5'} stroke="#222" /></svg>
  </button>
);

const Guide = ({ last, bare, children }) => (
  <span className="relative flex h-5 w-3 shrink-0 items-center">
    <span className={`absolute top-0 left-0 border-l border-dotted border-[#a0a0a0] ${last ? 'h-2.5' : 'h-5'}`} />
    {!bare && <span className="w-2.5 border-t border-dotted border-[#a0a0a0]" />}
    {children && <span className="absolute -left-1 flex">{children}</span>}
  </span>
);

const cell = 'h-5 border-r border-b border-[#e4e4e4] p-0 pl-[3px]';

const Navigator = () => {
  const [checked, setChecked] = useState(treeRows.map((r) => !!r.on));
  const [selected, setSelected] = useState(5);
  const toggle = (i) => setChecked(checked.map((c, j) => (i === j ? !c : c)));

  return (
    <Float title="分型导航器" pos="top-[102px] left-[342px] w-[463px]">
      <div className="border-x border-[#8a8a8a] bg-[#ececec] px-[7px] pt-2 pb-2">
        <div className="h-[497px] overflow-hidden border border-[#777] bg-white">
          <table className="w-full table-fixed border-collapse text-[12px] leading-none text-[#222]">
            <colgroup>
              <col className="w-[250px]" /><col className="w-[60px]" /><col className="w-[50px]" /><col className="w-20" /><col />
            </colgroup>
            <thead>
              <tr className="h-[17px] bg-linear-to-b from-[#f2f3f4] to-[#dcdfe1] text-left text-black">
                {['分型对象', '数量', '图层', 'ID', ''].map((h, i) => (
                  <th key={i} className={`border-r border-b border-[#a8abad] p-0 pl-[5px] font-normal last:border-r-0 ${h === 'ID' ? `text-[10px] ${MONO}` : ''}`}>{h}</th>
                ))}
              </tr>
            </thead>
            <tbody>
              <tr>
                <td className={cell}>
                  <span className="flex items-center">
                    <Expander sign="-" />
                    <span className="mx-0.5 w-1 border-t border-dotted border-[#a0a0a0]" />
                    <Icon name="stack" /><span className="pl-0.5">分型设计</span>
                  </span>
                </td>
                <td className={cell} /><td className={cell} /><td className={cell} /><td />
              </tr>
              {treeRows.map((r, i) => {
                const sel = selected === i ? 'bg-[#3399ff] text-white' : r.off ? 'text-[#c4c4c4]' : '';
                const num = `${cell} text-[10px] ${MONO} ${sel}`;
                return (
                  <tr key={i} onClick={() => setSelected(i)} className={i % 2 ? '' : 'bg-[#f7f7f7]'}>
                    <td className="h-5 border-r border-b border-[#e4e4e4] p-0 pl-7">
                      <label className="flex h-[19px] items-center">
                        <Guide last={i === 13} bare={r.sub}>{r.exp && <Expander sign={r.exp} />}</Guide>
                        {r.sub && <><span className="w-[7px]" /><Guide last={i === 8} /></>}
                        <span className="relative flex shrink-0">
                          <input type="checkbox" checked={checked[i]} onChange={() => toggle(i)} className="size-3 appearance-none border border-black bg-white" />
                          {checked[i] && <svg viewBox="0 0 12 12" className="pointer-events-none absolute inset-0 size-3"><path d="M2.5 5.5 5 9 10.5 1.5" fill="none" stroke="#b81c24" strokeWidth="2.2" /></svg>}
                        </span>
                        <span className="ml-0.5 flex"><Icon name={r.icon} /></span>
                        <span className={`flex h-full grow items-center pl-[3px] ${sel} ${r.latin ? `text-[10px] ${MONO}` : ''}`}>{r.name}</span>
                      </label>
                    </td>
                    <td className={num}>{r.n}</td>
                    <td className={num}>{r.layer}</td>
                    <td className={num}>{r.id}</td>
                    <td />
                  </tr>
                );
              })}
              {Array.from({ length: 9 }, (_, i) => (
                <tr key={i} className={i % 2 ? '' : 'bg-[#f7f7f7]'}>
                  <td className={cell} /><td className={cell} /><td className={cell} /><td className={cell} /><td />
                </tr>
              ))}
            </tbody>
          </table>
        </div>
      </div>
    </Float>
  );
};

//model view, drawn in window coordinates
const Scene = () => (
  <svg viewBox="76 124 1170 646" preserveAspectRatio="xMinYMin slice" className="absolute inset-0 h-full w-full" aria-hidden="true">
    <defs>
      <linearGradient id="rim" x1="0" y1="0" x2="0.15" y2="1">
        <stop offset="0" stopColor="#7a2e2a" /><stop offset=".4" stopColor="#8c3733" /><stop offset=".75" stopColor="#e0605a" /><stop offset="1" stopColor="#f0695f" />
      </linearGradient>
      <linearGradient id="lip" x1="0" y1="0" x2="-0.2" y2="1">
        <stop offset="0" stopColor="#e2625a" /><stop offset=".6" stopColor="#e8655d" /><stop offset="1" stopColor="#a9413c" />
      </linearGradient>
    </defs>
    <path d="M1018 124H1246V535L1178 512 1150 484 881 406V388Z" fill="#ffd75f" />
    <path d="M1018 124 881 388M1246 321 1162 484M1178 512 1246 534" stroke="#eda040" strokeWidth="2" fill="none" />
    <path d="M76 223.500H966" stroke="#fff" />
    <path d="M966 223.5H1246" stroke="#2a2410" />
    <path d="M560.5 124V170" stroke="#fff" />
    <g transform="translate(870 380) scale(.3333)" strokeLinejoin="round">
      <path d="M560 560 590 640 600 660 620 660 700 615 718 575 752 545V580H765L835 525 855 430 800 400Z" fill="#86332f" stroke="#30100e" />
      <path d="M635 615 655 575 710 545 690 600ZM790 535 805 495 848 470 838 505Z" fill="#9c403b" stroke="#30100e" strokeWidth="2" />
      <path d="M655 575 690 543 715 548 680 582ZM800 490 838 463 850 472 815 505Z" fill="#f4736a" stroke="#30100e" strokeWidth="2" />
      <path d="M640 620 665 585M695 575 680 605M795 540 815 505M838 480 825 515" stroke="#30100e" strokeWidth="3" />
      <path d="M33 77 870 312Q940 332 941 358 936 380 915 388L650 560Q600 582 560 574L33 385Z" fill="url(#lip)" stroke="#40120f" strokeWidth="3" />
      <path d="M33 98 200 140 700 275 850 325 700 338 500 316 330 285 175 238 33 172Z" fill="url(#rim)" />
      <path d="M500 262 850 326 700 308 490 282Z" fill="#8c3733" />
      <path d="M33 172 330 290 175 388 33 340Z" fill="#f56f66" />
      <path d="M345 292 500 318 845 352 830 376 630 500Q590 515 550 507L180 388Z" fill="#b94a44" stroke="#40120f" strokeWidth="3" />
      <path d="M345 303 500 332 530 345 500 400 440 400 330 430 200 390Z" fill="#e9645c" />
      <path d="M180 388 345 292 347 304 205 393Z" fill="#6b2724" />
      <path d="M290 350 320 336 340 345 310 368Z" fill="#6b2724" stroke="#40120f" />
      <ellipse cx="248" cy="398" rx="30" ry="14" fill="#7a2f2b" transform="rotate(8 248 398)" />
      <path d="M275 410Q290 360 360 350L400 385 330 432Z" fill="#c24f48" stroke="#40120f" />
      <path d="M525 375 540 368 665 405 680 450 692 460 622 498Q590 508 560 504L495 482Q535 455 533 415Z" fill="#000" />
      <path d="M530 345 700 370 790 380 760 420 690 460 675 450 665 403 528 370Z" fill="#7d302c" stroke="#30100e" strokeWidth="2" />
      <path d="M530 340 700 362 800 372 840 356 500 322Z" fill="#d45a52" stroke="#40120f" strokeWidth="2" />
      <path d="M715 365 795 372 800 388 712 378Z" fill="#8c3833" stroke="#30100e" />
      <path d="M695 388 705 388 703 432 695 436Z" fill="#000" />
      <path d="M330 436Q390 395 470 392 490 385 500 355L528 350 530 372 525 430Q515 462 480 484L450 474 350 440Z" fill="#dc5c54" stroke="#40120f" strokeWidth="3" />
      <path d="M350 436Q400 405 460 408 505 412 497 440L456 473Z" fill="#000" stroke="#40120f" strokeWidth="3" />
      <path d="M33 86 870 320Q905 335 900 355L620 525 33 355M33 92 850 326Q890 340 885 356L625 515 560 510 33 345M33 135 185 180 720 300 845 345M33 172 330 290M200 138Q195 190 180 225L85 360M706 280 704 335M775 300 770 345M870 318 845 350M520 560Q570 545 620 520L650 550" fill="none" stroke="#401512" strokeWidth="2" />
      <path d="M340 227 498 278 483 322 330 267Z" fill="#d0e4ec" stroke="#26343a" strokeWidth="2" />
      <path d="M330 267 483 322 462 396 415 398Z" fill="#4b5557" stroke="#20282a" strokeWidth="2" />
      <path d="M483 322 498 278 493 300 488 330Z" fill="#a8b6bc" />
      <text x="47" y="234" fontSize="33" fill="#3c35c4" fontFamily="'Liberation Sans',sans-serif">ZC</text>
      <path d="M97 238 105 265 84 342 79 342 86 262Z" fill="#14208c" />
      <path d="M76 358 33 425V440L48 422Z" fill="#b7c79a" stroke="#6a9060" strokeWidth="2" />
      <path d="M60 430 130 455 110 480 60 470ZM440 545 505 570 490 592 440 580Z" fill="#7a2c28" />
      <path d="M50 470 105 482 90 505 50 490ZM440 580 495 592 480 612 430 600Z" fill="#f26a66" />
      <path d="M62 480Q50 480 52 495" stroke="#50b030" strokeWidth="3" fill="none" />
    </g>
    <path d="M881 532 889 522V542L903 547 881 593Z" fill="#ffd060" />
    <path d="M913 530 1017 561V571L914 770H881V593Z" fill="#ffd75f" />
    <path d="M1013 580 1030 584 1040 568 1065 573 965 770H914Z" fill="#ffd75f" />
    <path d="M913 530 881 593M1017 571 916 770M1040 569 938 770M1065 574 966 770M889 524 881 540" stroke="#e8a03c" strokeWidth="2" fill="none" />
    <path d="M913 530 1017 561V571" stroke="#e0a848" fill="none" />
    <path d="M1014 573 912 770" stroke="#a0641e" fill="none" />
    <path d="M528 770 534 766H916V770Z" fill="#f0b848" />
    <path d="M112 691 132 698 121 728 102 720Z" fill="#a3a3a3" />
    <path d="M112 691 132 698 126 712 106 706Z" fill="#bdbdbd" stroke="#ddd" strokeWidth=".5" />
    <path d="M97 700 128 712" stroke="#a05058" />
    <path d="M134 690 136.5 702 132 712 130 712 130 702Z" fill="#12248c" />
    <path d="M130 715 124 730 117 741 120 726Z" fill="#2f9a3a" />
    <circle cx="131" cy="713" r="3.5" fill="#e6e6e6" />
    <path d="M131 682.5H136L131 689H137" fill="none" stroke="#1c2ea0" />
  </svg>
);

const sideText = [['导入', 'M', 'h-[57px]'], ['导出', 'E', 'h-14'], ['撤消列表', 'U', 'h-[79px]']];
const colA = 'gray1 gray2 gray1 fork purple curve1 curve2 cubegold+ ball pot+ post+ cyls fork+ mesh+ book+ section+ sheet';
const colB = [
  'crate blades vase cubehole cubegold cubedent cubepad saucer dome cubeslot pot',
  'tray post chain bool+ duo wave flame slab section pads tubes',
  'boxred slab fork',
];

const SideTools = ({ items }) =>
  items.split(' ').map((it, i) => {
    const drop = it.endsWith('+');
    const name = drop ? it.slice(0, -1) : it;
    return (
      <button key={i} aria-label={name} className={`flex h-[23px] shrink-0 items-center ${drop ? 'gap-0.5 pl-1' : 'justify-center'}`}>
        <Icon name={name} />
        {drop && <Arrow />}
      </button>
    );
  });

const tabs = [
  ['asmnav', ''], ['constr', ''], ['partnav', ''], ['books', ''], ['web', 'mt-3'], ['histpage', 'mt-3'],
  ['clock', 'mt-2.5'], ['roles', ''], ['rainbow', ''], ['jet', ''], ['people', ''], ['card', ''],
];

const Watermark = () => (
  <div className="pointer-events-none absolute bottom-2 left-2 size-32">
    <svg viewBox="8 664 128 128" className="absolute inset-0 size-full" aria-hidden="true">
      <defs>
        <filter id="rough" x="-10%" y="-10%" width="120%" height="120%">
          <feTurbulence type="fractalNoise" baseFrequency="0.11" numOctaves="3" seed="4" />
          <feDisplacementMap in="SourceGraphic" scale="6" />
        </filter>
      </defs>
      <g fill="none" stroke="#f80000" filter="url(#rough)">
        <path d="M74 678A54 54 0 1 0 122 754" strokeWidth="8" />
        <path d="M72 678A54 54 0 0 1 126 722" strokeWidth="5" />
        <path d="M128 742Q126 756 112 772" strokeWidth="4" />
        <path d="M26 706A52 52 0 0 0 36 772" strokeWidth="9" />
      </g>
      <g fill="#f80000">
        <circle cx="70" cy="695" r="5.5" />
        <path d="M51 701Q60 703 68 705 82 704 95 699 88 707 78 713 84 724 86 733H77Q76 726 70 720 66 724 61 724L54 721Q62 716 65 711 58 705 51 701Z" />
        <rect x="28" y="753" width="92" height="12" rx="2" />
      </g>
    </svg>
    <div className="absolute top-[66px] left-7 flex items-center font-bold text-[#f80000]">
      <span className="text-[19px] leading-5 font-['DejaVu_Sans',sans-serif]">UG</span>
      <span className="text-[16px] leading-5">爱好者</span>
    </div>
    <div className="absolute top-[89px] left-5 w-[92px] text-center text-[10px] leading-3 font-bold whitespace-nowrap text-white font-['Open_Sans',sans-serif]">WWW.UGSNX.COM</div>
  </div>
);

const taskBtn = 'flex h-7 items-center justify-center rounded-sm border border-[#85888c] bg-linear-to-b from-[#73767a] to-[#303338]';

function App() {
  return (
    <div className={`relative flex h-screen flex-col overflow-hidden bg-[#d6d6d6] text-[12px] leading-none text-black select-none ${CJK}`}>
      {/* title bar */}
      <header className="relative flex h-[22px] shrink-0 items-center bg-linear-to-b from-[#77797b] via-[#3a3a3b] via-40% to-[#161616] to-45% pr-0.5 pl-[3px]">
        <span className="absolute top-0 left-2/5 h-px w-[277px] rounded-b bg-white" />
        <Icon name="nx" size="size-[17px]" />
        <h1 className="grow pl-[5px] text-[13px] whitespace-pre text-white font-['Noto_Sans','Noto_Sans_CJK_SC',sans-serif]">NX 8 - 建模 - [1024.prt （修改的）]</h1>
        <span className="mr-[26px] text-[13px] font-extrabold text-white font-['Open_Sans',sans-serif]">SIEMENS</span>
        <div className="flex gap-[3px]">
          <button aria-label="最小化" className="flex size-[19px] items-end justify-center rounded-[3px] border border-[#777] bg-linear-to-b from-[#555] to-[#222] pb-1"><span className="h-[3px] w-2 bg-white" /></button>
          <button aria-label="还原" className="flex size-[19px] items-center justify-center rounded-[3px] border border-[#777] bg-linear-to-b from-[#555] to-[#222]">
            <svg viewBox="0 0 12 12" className="size-3"><path d="M4 3V1.5H10.5V7.5H9M1.5 4.5H7.5V10.5H1.5Z" fill="none" stroke="#fff" strokeWidth="1.4" /></svg>
          </button>
          <button aria-label="关闭" className="flex size-[19px] items-center justify-center rounded-[3px] border border-[#e8a090] bg-linear-to-b from-[#e88870] to-[#cc3418]">
            <svg viewBox="0 0 12 12" className="size-3"><path d="M1.5 1.5 10.5 10.5M10.5 1.5 1.5 10.5" stroke="#fff" strokeWidth="2" /></svg>
          </button>
        </div>
      </header>

      {/* menu */}
      <nav className="flex h-[23px] shrink-0 items-center bg-linear-to-b from-[#ebebeb] to-[#dedede] pr-1">
        <Grip />
        <span className="mr-1.5 ml-px flex"><Icon name="part" /></span>
        <div className="flex grow">
          {menus.map(([t, k]) => (
            <button key={t} className={`shrink-0 text-left ${t.length > 2 ? 'w-[67px]' : 'w-[55px]'}`}>
              {k ? t : <><span className={`text-[10px] ${MONO}`}>GC </span>工具箱</>}<Mnemonic k={k} />
            </button>
          ))}
        </div>
        <div className="flex gap-[3px]">
          {['M2 9.5H8', 'M4 3.5V1.5H10.5V7H9M2 4.5H8V10.5H2ZM2 6H8', 'M2 2 10 10M10 2 2 10'].map((d) => (
            <button key={d} aria-label="文档窗口" className="flex size-4 items-center justify-center rounded-[4px] border border-[#666] bg-[#f4f4f4]">
              <svg viewBox="0 0 12 12" className="size-2.5"><path d={d} fill="none" stroke="#555" strokeWidth="2" /></svg>
            </button>
          ))}
        </div>
      </nav>

      {/* standard toolbar */}
      <div className="flex h-[30px] shrink-0 items-center border-t border-b border-t-[#bdbdbd] border-b-[#9c9c9c] bg-linear-to-b from-[#dedede] to-[#cdcdcd]">
        <Grip />
        <Tools items="nx" />
        <button className="flex items-center">开始<Arrow /></button>
        <Tools items="save | cut | redo | find" />
        <button className="mr-1 w-15 text-left whitespace-nowrap">命令查找器</button>
        <Tools items="stack v | rot rotpage | infogem info V" />
        <Edge /><Grip />
        <Combo label="工作图层" value="27" width="w-[38px] mr-[5px] ml-px" latin />
        <Tools items="laylist wcs wcsdrag axes v | brush palette | play v gems1 gems2 gems3 | ruler angle" />
        <button className="flex items-center pl-1">形状<Mnemonic k="S" /><Arrow /></button>
        <Arrow low />
        <Edge /><Grip />
        <Tools items="netsel layers laylist | tag | okpart oksurf okbox | editbar V" />
        <Edge />
      </div>

      {/* selection toolbar */}
      <div className="flex h-[27px] shrink-0 items-center bg-linear-to-b from-[#c6c6c6] via-[#dadada] to-[#d4d4d4] pr-1 pl-[5px]">
        <Combo label="选择过滤器" value="没有选择过滤器" width="w-[111px] mr-[7px]" />
        <Combo label="选择范围" value="整个装配" width="w-[117px] mr-1" />
        <Tools items="grayhold | snapf v back gembox grayarc graytap | rect v | *snapall snapref *endpt *midpt ctrlpt interpt *center quad *exist *oncurve onface | bluecube" />
        <span className="grow" />
        <Arrow low />
      </div>

      {/* cue line */}
      <div className="flex h-[22px] shrink-0 items-center border-t border-[#efefef] bg-[#d9d9d9] px-[3px]">
        <p className="w-[588px] text-[13px] font-bold whitespace-nowrap">选择对象并使用 <span className={`text-[11px] ${MONO}`}>MB3</span>，或者双击某一对象</p>
        <span className="h-full grow border-l border-[#a8a8a8]" />
        <span className="h-full w-5 border-l border-[#a8a8a8]" />
        <span className="h-full w-9 border-l border-[#a8a8a8]" />
        <span className="flex h-full items-center gap-[5px] border-l border-[#a8a8a8] pl-0.5"><Icon name="flags" /><Icon name="screen" /></span>
      </div>

      <main className="flex min-h-0 grow">
        <aside className="flex w-[38px] shrink-0 flex-col overflow-hidden border-r border-[#a8a8a8] bg-linear-to-r from-[#e6e6e6] to-[#d2d2d2]">
          <span className="mx-1.5 mt-1 mb-1 h-[3px] shrink-0 border-t-2 border-dotted border-[#9a9a9a]" />
          {sideText.map(([t, k, h]) => (
            <button key={t} className={`flex w-9 shrink-0 items-center gap-1 text-left [text-orientation:sideways] [writing-mode:vertical-rl] ${h}`}>
              <span className="whitespace-nowrap">{t}<Mnemonic k={k} /></span>
              <svg viewBox="0 0 3 6" className="h-1.5 w-[3px]"><path d="M3 0V6L0 3Z" /></svg>
            </button>
          ))}
          <button aria-label="点" className="flex h-[23px] shrink-0 items-center justify-center"><svg viewBox="0 0 14 14" className="size-3.5"><path d="M7 0V14M0 7H14" stroke="#000" strokeWidth="1.3" /></svg></button>
          <SideTools items={colA} />
          <span className="mt-auto mb-1.5 ml-1 flex"><Arrow side /></span>
        </aside>
        <aside className="flex w-[38px] shrink-0 flex-col overflow-hidden border-l border-white bg-linear-to-r from-[#e6e6e6] to-[#d2d2d2]">
          <span className="mx-1.5 mt-1 h-[3px] shrink-0 border-t-2 border-dotted border-[#9a9a9a]" />
          <SideTools items="sheet+" />
          {colB.map((items) => (
            <React.Fragment key={items}>
              <span className="mx-0.5 my-0.5 h-0.5 shrink-0 border-b border-white bg-[#a9a9a9]" />
              <SideTools items={items} />
            </React.Fragment>
          ))}
        </aside>

        <div className="relative grow overflow-hidden bg-black">
          <Scene />
          <Float title="注塑模向导" drop pos="top-px left-[57px] w-[284px]">
            <div className="flex flex-wrap items-center bg-linear-to-b from-[#e9e9e9] to-[#cfcfcf] px-0.5 py-0.5">
              <Tools items="pagetree okpart family xyz workbox layout shrink tools *stack list clamp mirror slide insert runner gate hammer drill ejector v pocket bom drawing v eye jar report" />
            </div>
          </Float>
          <Float title="模具分型工具" drop pos="top-11 left-[346px] w-[215px]">
            <div className="flex bg-linear-to-b from-[#e9e9e9] to-[#cfcfcf] px-[3px] py-0.5">
              <Tools items="region checkr patch design surf cavity swap copies navtree" />
            </div>
          </Float>
          <Float pos="top-[101px] left-[130px] w-[171px]">
            <div className="flex flex-wrap items-center bg-linear-to-b from-[#e9e9e9] to-[#cfcfcf] px-[3px] py-0.5">
              <Tools items="mcmove v mctri v mccut mccopy v mcpair v mcdim v mcgrp mcdup" />
            </div>
          </Float>
          <Navigator />
        </div>

        <aside className="flex w-[34px] shrink-0 border-l-[5px] border-[#ececec]">
          <div className="flex grow flex-col border-l border-[#808080] bg-[#b2b2b2] pt-[17px]">
            {tabs.map(([name, gap]) => (
              <button
                key={name}
                aria-label={name}
                className={`mb-px flex shrink-0 items-center justify-center rounded-r-[4px] border border-l-0 border-[#707070] ${gap} ${name === 'clock' ? 'h-9 w-6 bg-[#f0f0f0]' : 'h-[33px] w-[22px] bg-[#dcdcdc]'}`}
              >
                <Icon name={name} />
              </button>
            ))}
          </div>
        </aside>
      </main>

      {/* taskbar */}
      <footer className="flex h-[30px] shrink-0 items-center border-t border-[#6c7074] bg-[radial-gradient(circle_at_735px_12px,#a01c50_0,transparent_16px),linear-gradient(90deg,transparent_850px,#b08a30_855px,transparent_862px),linear-gradient(90deg,#1d2328_0,#2a2c34_400px,#3a2a46_560px,#563a68_720px,#4a3058_860px,#241e2c_960px,#1d2126_1060px)]">
        <button aria-label="开始菜单" className="ml-2 flex size-9 shrink-0 items-center justify-center rounded-full border border-[#5c8cb0] bg-radial from-[#64c4ee] to-[#123a68]">
          <svg viewBox="0 0 20 20" className="size-5">
            <path d="M2 4Q6 1 9.5 3L8.5 9Q5 7 1 9.5Z" fill="#f0602c" />
            <path d="M10.5 3.5Q14 5 18.5 3L17.5 9Q13 11 9.5 9.5Z" fill="#8cc83c" />
            <path d="M1 10.5Q5 8 8.5 10L7.5 16Q4 14 0 16.5Z" fill="#3c9ce8" />
            <path d="M9.5 10.5Q13 12 17.5 10L16.5 16Q12 18 8.5 16.5Z" fill="#ffc828" />
          </svg>
        </button>
        <svg viewBox="0 0 20 20" className="ml-[25px] size-5 shrink-0" aria-hidden="true">
          <circle cx="13" cy="6" r="5" fill="#f4efe8" stroke="#e06830" strokeWidth="2" />
          <circle cx="4" cy="8" r="4" fill="#e83820" /><circle cx="5" cy="14" r="3.5" fill="#58b030" /><circle cx="13" cy="14" r="3" fill="#f0c020" />
        </svg>
        <button aria-label="浏览器" className={`ml-4 w-[42px] ${taskBtn}`}><Icon name="browser" /></button>
        <button aria-label="显示桌面" className="ml-4 flex"><Icon name="desktop" size="size-[18px]" /></button>
        <button aria-label="资源管理器" className={`ml-4 w-[37px] ${taskBtn}`}><Icon name="folder" size="size-[18px]" /></button>
        <span className="h-7 w-1 rounded-r-sm border border-l-0 border-[#777]" />
        <button aria-label="NX" className="ml-1 flex h-7 w-[37px] items-center justify-center rounded-sm border border-[#c8c8c8] bg-linear-to-b from-[#c4c4c6] to-[#808286]"><Icon name="nx" size="size-[18px]" /></button>
        <span className="h-7 w-1 rounded-r-sm border border-l-0 border-[#999] bg-[#666]" />
        <span className="grow" />
        <div className="flex items-center">
          <Icon name="keyboard" />
          <svg viewBox="0 0 8 4" className="mx-[15px] h-1 w-2"><path d="M0 4H8L4 0Z" fill="#fff" /></svg>
          <div className="flex gap-2">
            <Icon name="qq1" /><Icon name="qq2" /><Icon name="safe" /><Icon name="signal" /><Icon name="speaker" />
          </div>
          <time className="mx-4 text-[12px] text-white font-['Open_Sans',sans-serif]">14:24</time>
          <button aria-label="桌面" className="h-[29px] w-3 border border-[#777] bg-linear-to-b from-[#555a60] to-[#22262a]" />
        </div>
      </footer>

      <Watermark />
    </div>
  );
}

export default App;
